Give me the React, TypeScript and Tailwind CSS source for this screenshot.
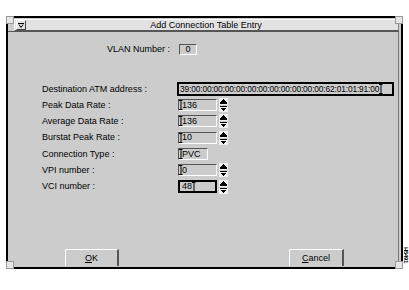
import React from 'react'

const ROWS: { label: string; value: string; width: string; spin: boolean; active?: boolean }[] = [
  { label: 'Peak Data Rate :', value: '136', width: 'w-[39px]', spin: true },
  { label: 'Average Data Rate :', value: '136', width: 'w-[39px]', spin: true },
  { label: 'Burstat Peak Rate :', value: '10', width: 'w-[39px]', spin: true },
  { label: 'Connection Type :', value: 'PVC', width: 'w-[30px]', spin: false },
  { label: 'VPI number :', value: '0', width: 'w-[39px]', spin: true },
  { label: 'VCI number :', value: '48', width: 'w-[39px]', spin: true, active: true },
]

function Caret() {
  return (
    <svg width="4" height="10" viewBox="0 0 4 10" className="shrink-0">
      <path d="M0 0.5H3.5M2 0V10M0 9.5H3.5" stroke="#000" strokeWidth="1" fill="none" />
    </svg>
  )
}

// motif style arrow pair
function Spinner() {
  return (
    <svg width="9" height="14" viewBox="0 0 9 14" className="shrink-0" shapeRendering="crispEdges">
      <rect x="0" y="0" width="9" height="6.5" fill="#f0f0f0" />
      <path d="M1 4.5L4.5 1L8 4.5Z" fill="#000" />
      <rect x="1" y="5" width="7" height="1" fill="#000" />
      <rect x="0" y="7.5" width="9" height="6.5" fill="#f0f0f0" />
      <rect x="1" y="8" width="7" height="1" fill="#000" />
      <path d="M1 9.5L4.5 13L8 9.5Z" fill="#000" />
    </svg>
  )
}

function Field({ value, width, active }: { value: string; width: string; active?: boolean }) {
  if (active) {
    return (
      <div className={`${width} h-[13px] border-2 border-black flex items-center pl-[2px] bg-[#cccccc]`}>
        <span className="text-[9px] leading-none">{value}</span>
        <Caret />
      </div>
    )
  }
  return (
    <div
      className={`${width} h-[12px] border border-t-[#555] border-l-[#555] border-r-white border-b-white flex items-center bg-[#cccccc]`}
    >
      <Caret />
      <span className="text-[9px] leading-none -ml-[1px]">{value}</span>
    </div>
  )
}

export default function App() {
  return (
    <div className="w-[409px] h-[290px] bg-white relative overflow-hidden font-['Liberation_Sans',Arial,sans-serif] text-black">
      <div className="pt-[16px] pl-[6px]">
        <div className="relative w-[397px] h-[253px] border-2 border-black bg-[#cccccc] flex flex-col">
          {/* title bar */}
          <div className="ml-[6px] mr-[2px] mt-[1px] h-[12px] bg-[#e2e2e2] border border-t-white border-l-white border-r-[#888] border-b-[#555] flex items-center">
            <div className="ml-[1px] w-[10px] h-[10px] border border-t-white border-l-white border-r-[#444] border-b-[#444] flex items-center justify-center">
              <svg width="6" height="5" viewBox="0 0 6 5">
                <path d="M0 0.5H6M1 1.5L3 4.5L5 1.5" stroke="#000" fill="none" strokeWidth="1" />
              </svg>
            </div>
            <span className="flex-1 text-center text-[9px] leading-none pr-[12px]">Add Connection Table Entry</span>
          </div>

          {/* body */}
          <div className="flex-1 border-t border-[#555] mr-[2px] border-r border-r-[#777] flex flex-col">
            <div className="flex items-center mt-[12px]">
              <span className="w-[162px] text-right text-[9px] leading-none">VLAN Number :</span>
              <div className="ml-[9px] w-[18px] h-[11px] border border-t-[#555] border-l-[#555] border-r-white border-b-white flex items-center justify-center">
                <span className="text-[9px] leading-none">0</span>
              </div>
            </div>

            <div className="flex items-center mt-[27px] ml-[34px]">
              <span className="w-[135px] text-[9px] leading-none">Destination ATM address :</span>
              <div className="w-[217px] h-[14px] border-2 border-black flex items-center pl-[1px]">
                <span className="text-[8.4px] leading-none tracking-[-0.15px]">39:00:00:00:00:00:00:00:00:00:00:00:00:62:01:01:91:00</span>
                <Caret />
              </div>
            </div>

            <div className="flex flex-col ml-[34px] mt-[1px]">
              {ROWS.map((r) => (
                <div key={r.label} className="flex items-center h-[16.3px]">
                  <span className="w-[136px] text-[9px] leading-none">{r.label}</span>
                  <Field value={r.value} width={r.width} active={r.active} />
                  {r.spin && (
                    <div className="ml-[2px]">
                      <Spinner />
                    </div>
                  )}
                </div>
              ))}
            </div>

            <div className="flex-1" />
            <div className="flex ml-[57px] mb-[1px]">
              <button className="w-[54px] h-[17px] bg-[#cccccc] border border-t-white border-l-white border-r-2 border-r-[#555] border-b-0 text-[9px] leading-none">
                <span className="underline">O</span>K
              </button>
              <div className="w-[170px]" />
              <button className="w-[55px] h-[17px] bg-[#cccccc] border border-t-white border-l-white border-r-2 border-r-[#555] border-b-0 text-[9px] leading-none">
                <span className="underline">C</span>ancel
              </button>
            </div>
          </div>

          {/* resize corner handles */}
          <div className="absolute -left-[2px] -top-[2px] w-[8px] h-[8px] bg-[#e6e6e6] border border-[#999]" />
          <div className="absolute -right-[2px] -top-[2px] w-[8px] h-[8px] bg-[#e6e6e6] border border-[#999]" />
          <div className="absolute -left-[2px] -bottom-[2px] w-[8px] h-[8px] bg-[#e6e6e6] border border-[#999]" />
          <div className="absolute -right-[2px] -bottom-[2px] w-[8px] h-[8px] bg-[#e6e6e6] border border-[#999]" />
        </div>
      </div>
      <span className="absolute left-[398px] top-[252px] rotate-90 text-[6px] leading-none font-bold tracking-[-0.3px]">H5491</span>
    </div>
  )
}
